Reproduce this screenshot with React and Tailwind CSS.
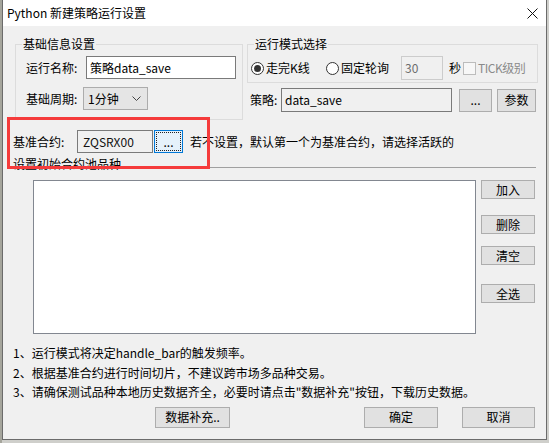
const font = { fontFamily: '"Noto Sans CJK SC", "Liberation Sans", sans-serif' };

const Btn = ({ className = '', children }) => (
  <div className={`flex items-center justify-center bg-[#e1e1e1] border border-[#adadad] text-[12px] leading-none text-black ${className}`}>
    {children}
  </div>
);

const Radio = ({ checked }) => (
  <div className="w-[13px] h-[13px] rounded-full border border-[#333] bg-white flex items-center justify-center shrink-0">
    {checked && <div className="w-[7px] h-[7px] rounded-full bg-[#333]" />}
  </div>
);

const App = () => {
  return (
    <div className="w-[549px] h-[443px] bg-[#cfcfcb] relative overflow-hidden text-[12px] text-black" style={font}>
      <div className="absolute left-0 top-0 w-[2px] h-full bg-[#a5a59c]" />
      <div className="ml-[2px] w-[545px] h-[440px] border border-t-0 border-[#6b6b6b] bg-[#f0f0f0] flex flex-col">
        {/* title bar */}
        <div className="h-[26px] bg-white flex items-center justify-between pl-[4px] pr-[8px] shrink-0">
          <span className="leading-none">Python 新建策略运行设置</span>
          <svg width="11" height="11" viewBox="0 0 11 11">
            <path d="M0.5 0.5 L10.5 10.5 M10.5 0.5 L0.5 10.5" stroke="#111" strokeWidth="1" />
          </svg>
        </div>

        {/* body */}
        <div className="flex-1 flex flex-col">
          <div className="flex pl-[12px] gap-[4px] mt-[18px]">
            {/* 基础信息设置 */}
            <div className="relative w-[228px] h-[76px] border border-[#dcdcdc]">
              <span className="absolute left-[6px] top-[-9px] px-[1px] bg-[#f0f0f0] leading-[16px]">基础信息设置</span>
              <div className="flex items-center ml-[10px] mt-[11px]">
                <span className="w-[60px] leading-none">运行名称:</span>
                <div className="w-[150px] h-[23px] bg-white border border-[#7a7a7a] flex items-center pl-[3px]">策略data_save</div>
              </div>
              <div className="flex items-center ml-[10px] mt-[8px]">
                <span className="w-[57px] leading-none">基础周期:</span>
                <div className="w-[65px] h-[23px] bg-[#e5e5e5] border border-[#acacac] flex items-center justify-between pl-[4px] pr-[6px]">
                  <span>1分钟</span>
                  <svg width="9" height="6" viewBox="0 0 9 6">
                    <path d="M0.5 0.5 L4.5 4.5 L8.5 0.5" stroke="#444" fill="none" strokeWidth="1" />
                  </svg>
                </div>
              </div>
            </div>

            {/* 运行模式选择 */}
            <div className="w-[291px] flex flex-col">
              <div className="relative h-[39px] border border-[#dcdcdc]">
                <span className="absolute left-[6px] top-[-9px] px-[1px] bg-[#f0f0f0] leading-[16px]">运行模式选择</span>
                <div className="flex items-center mt-[11px] pl-[3px] h-[24px]">
                  <Radio checked />
                  <span className="ml-[2px] w-[60px]">走完K线</span>
                  <Radio />
                  <span className="ml-[2px] w-[60px]">固定轮询</span>
                  <div className="w-[42px] h-[24px] border border-[#cccccc] bg-[#f0f0f0] text-[#6d6d6d] flex items-center pl-[3px]">30</div>
                  <span className="ml-[6px]">秒</span>
                  <div className="ml-[2px] w-[13px] h-[13px] border border-[#bcbcbc] bg-[#f7f7f7]" />
                  <span className="ml-[2px] text-[#8a8a8a] tracking-[-0.5px]">TICK级别</span>
                </div>
              </div>
              <div className="flex items-center mt-[5px] pl-[3px]">
                <span className="w-[31px]">策略:</span>
                <div className="w-[171px] h-[24px] bg-[#f0f0f0] border border-[#7a7a7a] flex items-center pl-[3px]">data_save</div>
                <Btn className="ml-[7px] w-[33px] h-[23px]">...</Btn>
                <Btn className="ml-[5px] w-[39px] h-[23px]">参数</Btn>
              </div>
            </div>
          </div>

          {/* 基准合约 */}
          <div className="flex items-center mt-[10px] pl-[10px]">
            <span className="w-[64px]">基准合约:</span>
            <div className="w-[76px] h-[23px] bg-[#f0f0f0] border border-[#7a7a7a] flex items-center pl-[5px] text-[#111]">ZQSRX00</div>
            <div className="ml-[1px] w-[29px] h-[23px] border border-[#0078d7] bg-[#e5f1fb] p-[1px]">
              <div className="w-full h-full border border-dotted border-[#222] flex items-center justify-center leading-none">...</div>
            </div>
            <span className="ml-[7px]">若不设置，默认第一个为基准合约，请选择活跃的</span>
          </div>

          {/* 设置初始合约池品种 */}
          <div className="flex items-start mt-[3px] pl-[10px] pr-[10px] h-[16px]">
            <span className="leading-[16px]">设置初始合约池品种</span>
            <div className="flex-1 h-px bg-[#a0a0a0] mt-[11px] ml-[4px]" />
          </div>

          <div className="flex mt-[8px] pl-[30px]">
            <div className="w-[443px] h-[154px] bg-white border border-[#828790]" />
            <div className="ml-[5px] flex flex-col">
              <Btn className="w-[54px] h-[19px]">加入</Btn>
              <Btn className="w-[54px] h-[19px] mt-[16px]">删除</Btn>
              <Btn className="w-[54px] h-[19px] mt-[12px]">清空</Btn>
              <Btn className="w-[54px] h-[19px] mt-[19px]">全选</Btn>
            </div>
          </div>

          <div className="mt-[9px] pl-[10px] leading-[19.5px]">
            <div>1、运行模式将决定handle_bar的触发频率。</div>
            <div>2、根据基准合约进行时间切片，不建议跨市场多品种交易。</div>
            <div>3、请确保测试品种本地历史数据齐全，必要时请点击"数据补充"按钮，下载历史数据。</div>
          </div>

          <div className="flex mt-[5px]">
            <Btn className="ml-[152px] w-[75px] h-[21px]">数据补充..</Btn>
            <Btn className="ml-[134px] w-[74px] h-[21px]">确定</Btn>
            <Btn className="ml-[24px] w-[73px] h-[21px]">取消</Btn>
          </div>
        </div>
      </div>

      {/* red annotation box */}
      <div className="absolute left-[7px] top-[117px] w-[203px] h-[52px] border-[3px] border-[#f53b3b]" />
    </div>
  );
};

export default App;
